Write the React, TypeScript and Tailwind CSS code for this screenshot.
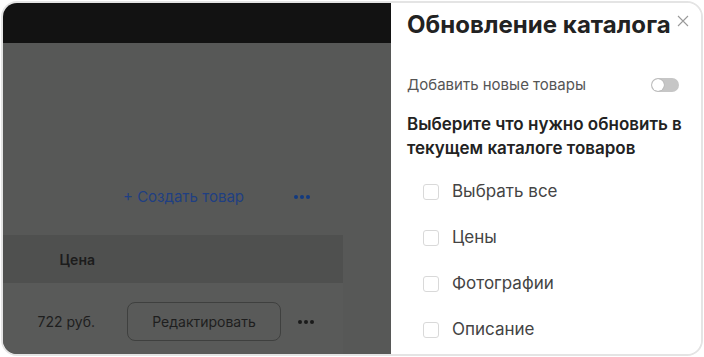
import React from 'react';

const Dots = ({ className }: { className: string }) => (
    <div className={`flex items-center gap-[2px] ${className}`}>
        <span className="h-[4px] w-[4px] rounded-full bg-current" />
        <span className="h-[4px] w-[4px] rounded-full bg-current" />
        <span className="h-[4px] w-[4px] rounded-full bg-current" />
    </div>
);

const options = ['Выбрать все', 'Цены', 'Фотографии', 'Описание'];

export default function App() {
    return (
        <div className="h-[357px] w-[704px] bg-white p-px font-['Inter',sans-serif]">
            <div className="flex h-full w-full overflow-hidden rounded-[16px] border-2 border-[#e4e4e4]">
                {/* Dimmed page behind the drawer */}
                <div className="flex min-h-0 flex-1 flex-col">
                    <div className="h-[40px] shrink-0 bg-[#121212]" />
                    <div className="min-h-0 flex-1 bg-[#575857] pt-[142px]">
                        <div className="w-[340px]">
                            <div className="flex h-[24px] items-center justify-end pr-[33px]">
                                <span className="text-[15px] text-[#1f3f82]">
                                    + Создать товар
                                </span>
                                <Dots className="ml-[50px] text-[#123a80]" />
                            </div>

                            {/* Table header */}
                            <div className="mt-[26px] flex h-[48px] shrink-0 items-center bg-[#4f504f]">
                                <span className="w-[92px] text-right text-[14px] font-semibold text-[#1c1c1c]">
                                    Цена
                                </span>
                            </div>

                            {/* Table row */}
                            <div className="flex items-center bg-[#595a59] pt-[19px] pb-[20px]">
                                <span className="w-[92px] text-right text-[14px] text-[#1e1e1e]">
                                    722 руб.
                                </span>
                                <div className="ml-[32px] flex h-[39px] w-[154px] items-center justify-center rounded-[8px] border border-[#3f403f] text-[14px] text-[#1e1e1e]">
                                    Редактировать
                                </div>
                                <Dots className="ml-[17px] text-[#1a1a1a]" />
                            </div>
                        </div>
                    </div>
                </div>

                {/* Drawer */}
                <div className="relative w-[310px] shrink-0 bg-white px-[16px] pt-[8px]">
                    <h2 className="text-[24px] leading-[28px] font-bold tracking-[0.05px] text-[#222]">
                        Обновление каталога
                    </h2>
                    <button className="absolute top-[10px] right-[10px] flex h-[16px] w-[16px] items-center justify-center text-[#9a9a9a]">
                        <svg width="12" height="12" viewBox="0 0 12 12" fill="none" stroke="currentColor" strokeWidth="1.1">
                            <path d="M1 1l10 10M11 1L1 11" />
                        </svg>
                    </button>

                    <div className="mt-[36px] flex h-[20px] items-center justify-between pr-[6px]">
                        <span className="text-[15px] text-[#555]">
                            Добавить новые товары
                        </span>
                        <div className="flex h-[14px] w-[28px] items-center rounded-full bg-[#c6c6c6] px-px">
                            <span className="h-[12px] w-[12px] rounded-full bg-white shadow-[0_0_1px_rgba(0,0,0,0.4)]" />
                        </div>
                    </div>

                    <p className="mt-[17px] -mr-[10px] text-[17px] leading-[24px] font-semibold text-[#222]">
                        Выберите что нужно обновить в
                        <br />
                        текущем каталоге товаров
                    </p>

                    <div className="mt-[20px] flex flex-col gap-[22px] pl-[16px]">
                        {options.map((label) => (
                            <label key={label} className="flex h-[24px] items-center gap-[13px]">
                                <span className="h-[16px] w-[16px] rounded-[3px] border border-[#d9d9d9] bg-white" />
                                <span className="text-[17px] text-[#444]">{label}</span>
                            </label>
                        ))}
                    </div>
                </div>
            </div>
        </div>
    );
}
